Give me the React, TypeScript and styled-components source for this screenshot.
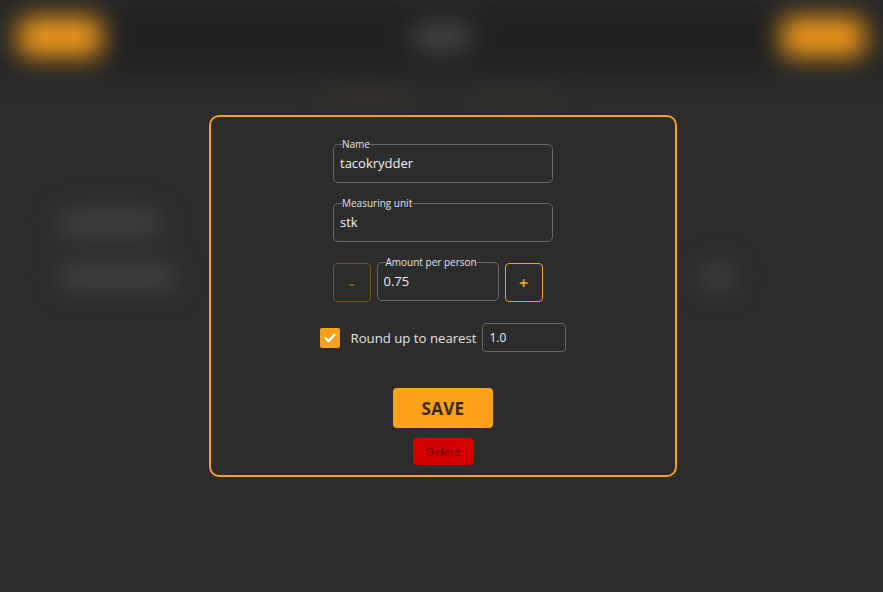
import React from "react";
import styled, { createGlobalStyle } from "styled-components";

const Global = createGlobalStyle`
  html, body { margin: 0; padding: 0; background: #2c2c2c; }
  body { font-family: "Open Sans", "Noto Sans", sans-serif; overflow: hidden; }
  #root { width: 883px; height: 592px; }
`;

const Page = styled.div`
  position: relative;
  width: 883px;
  height: 592px;
  background: #2c2c2c;
  overflow: hidden;
`;

const Backdrop = styled.div`
  width: 100%;
  height: 100%;
  filter: blur(13px);
  display: flex;
  flex-direction: column;
`;

const Header = styled.header`
  height: 74px;
  background: #202020;
  display: flex;
  align-items: center;
  justify-content: space-between;
  padding: 0 18px;
`;

const HeaderButton = styled.div`
  width: 84px;
  height: 40px;
  border-radius: 8px;
  background: #f09a1c;
`;

const HeaderTitle = styled.div`
  width: 56px;
  height: 24px;
  border-radius: 6px;
  background: #4c4c4c;
`;

const Tabs = styled.div`
  display: flex;
  justify-content: center;
  gap: 70px;
  padding-top: 20px;
  height: 30px;
`;

const Tab = styled.div<{ $active?: boolean }>`
  width: 80px;
  height: 10px;
  border-radius: 4px;
  background: ${(p) => (p.$active ? "#3f3626" : "#3a3428")};
`;

const Content = styled.div`
  display: grid;
  grid-template-columns: 1fr 1fr;
  padding: 88px 150px 0 60px;
  row-gap: 32px;
`;

const Blob = styled.div<{ $w: number; $justify?: string }>`
  width: ${(p) => p.$w}px;
  height: 22px;
  border-radius: 6px;
  background: #474747;
  justify-self: ${(p) => p.$justify || "start"};
`;

const Modal = styled.div`
  position: absolute;
  left: 209px;
  top: 115px;
  width: 468px;
  height: 362px;
  box-sizing: border-box;
  border: 2px solid #f7a01d;
  border-radius: 10px;
  background: #2c2c2c;
  display: flex;
  flex-direction: column;
  align-items: center;
  padding-top: 21px;
`;

const Field = styled.fieldset<{ $w: number }>`
  margin: 0;
  width: ${(p) => p.$w}px;
  box-sizing: border-box;
  border: 1px solid #696969;
  border-radius: 5px;
  padding: 0 6px 6px 6px;
  display: block;
`;

const Legend = styled.legend`
  font-size: 10px;
  line-height: 12px;
  color: #e6e6e6;
  padding: 0;
  margin-left: 2px;
`;

const TextInput = styled.input`
  display: block;
  background: transparent;
  border: none;
  outline: none;
  color: #f0f0f0;
  font-family: "Open Sans", "Noto Sans", sans-serif;
  font-size: 13px;
  height: 26px;
  line-height: 26px;
  width: 100%;
  padding: 0;
  margin: 0;
`;

const FieldGap = styled.div<{ $h: number }>`
  height: ${(p) => p.$h}px;
  flex-shrink: 0;
`;

const StepperRow = styled.div`
  display: flex;
  align-items: flex-end;
  gap: 6px;
  margin-right: 11px;
`;

const StepButton = styled.button<{ $dim?: boolean }>`
  width: 38px;
  height: 39px;
  box-sizing: border-box;
  border-radius: 4px;
  background: transparent;
  border: 1px solid ${(p) => (p.$dim ? "#7a5418" : "#f7a01d")};
  color: ${(p) => (p.$dim ? "#8a5e1a" : "#f7a01d")};
  font-family: "Open Sans", sans-serif;
  font-size: 16px;
  font-weight: 700;
  padding: 0;
  display: flex;
  align-items: center;
  justify-content: center;
  margin-bottom: -1px;
`;

const CheckRow = styled.div`
  display: flex;
  align-items: center;
  margin-top: 22px;
`;

const CheckBox = styled.div`
  width: 20px;
  height: 20px;
  border-radius: 2px;
  background: #f7a01d;
  display: flex;
  align-items: center;
  justify-content: center;
  margin-right: 11px;
`;

const CheckLabel = styled.span`
  color: #e4e4e4;
  font-size: 13.2px;
  margin-right: 6px;
`;

const SmallInput = styled.input`
  width: 84px;
  height: 29px;
  box-sizing: border-box;
  border: 1px solid #696969;
  border-radius: 4px;
  background: transparent;
  color: #f0f0f0;
  font-family: "Open Sans", sans-serif;
  font-size: 12px;
  padding: 0 6px;
  outline: none;
`;

const SaveButton = styled.button`
  margin-top: 36px;
  width: 100px;
  height: 40px;
  border: none;
  border-radius: 4px;
  background: #fda119;
  color: #3a2a0c;
  font-family: "Open Sans", sans-serif;
  font-size: 17px;
  font-weight: 700;
  letter-spacing: 0.3px;
`;

const DeleteButton = styled.button`
  margin-top: 10px;
  width: 61px;
  height: 27px;
  border: none;
  border-radius: 4px;
  background: #d30000;
  color: #600000;
  font-family: "Open Sans", sans-serif;
  font-size: 11.5px;
  padding: 0;
`;

export default function App() {
  return (
    <Page>
      <Global />
      <Backdrop>
        <Header>
          <HeaderButton />
          <HeaderTitle />
          <HeaderButton />
        </Header>
        <Tabs>
          <Tab $active />
          <Tab />
        </Tabs>
        <Content>
          <Blob $w={100} />
          <div />
          <Blob $w={115} />
          <Blob $w={30} $justify="end" />
        </Content>
      </Backdrop>
      <Modal>
        <Field $w={220}>
          <Legend>Name</Legend>
          <TextInput defaultValue="tacokrydder" />
        </Field>
        <FieldGap $h={14} />
        <Field $w={220}>
          <Legend>Measuring unit</Legend>
          <TextInput defaultValue="stk" />
        </Field>
        <FieldGap $h={14} />
        <StepperRow>
          <StepButton $dim>-</StepButton>
          <Field $w={122}>
            <Legend>Amount per person</Legend>
            <TextInput defaultValue="0.75" />
          </Field>
          <StepButton>+</StepButton>
        </StepperRow>
        <CheckRow>
          <CheckBox>
            <svg width="14" height="14" viewBox="0 0 14 14">
              <path d="M2.5 7.2 L5.6 10.2 L11.5 3.8" fill="none" stroke="#fff" strokeWidth="2.4" strokeLinecap="round" strokeLinejoin="round" />
            </svg>
          </CheckBox>
          <CheckLabel>Round up to nearest</CheckLabel>
          <SmallInput defaultValue="1.0" />
        </CheckRow>
        <SaveButton>SAVE</SaveButton>
        <DeleteButton>Delete</DeleteButton>
      </Modal>
    </Page>
  );
}
